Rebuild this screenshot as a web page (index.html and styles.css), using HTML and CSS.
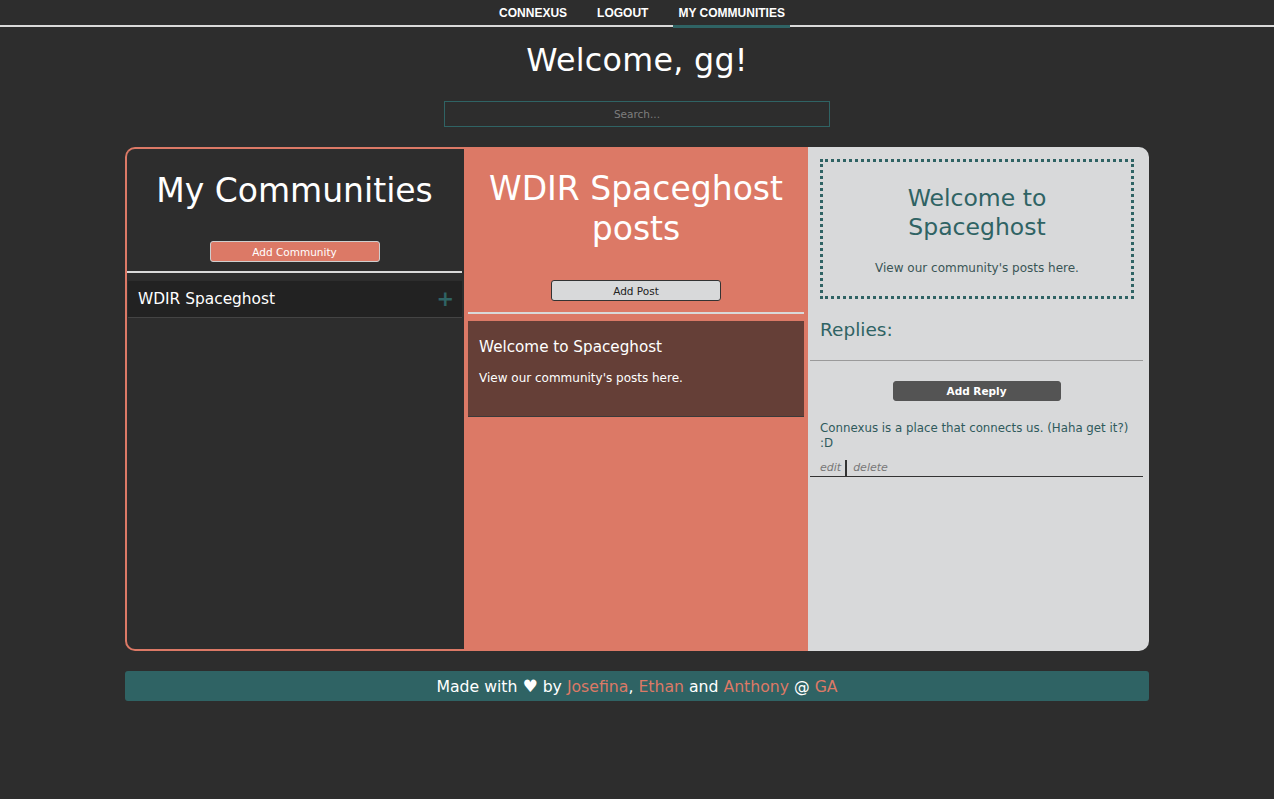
FILE: index.html
```html
<!DOCTYPE html>
<html>
<head>
<meta charset="utf-8">
<link rel="stylesheet" href="styles.css">
</head>
<body>
<nav class="topnav">
  <a class="nav-item">CONNEXUS</a>
  <a class="nav-item">LOGOUT</a>
  <a class="nav-item active">MY COMMUNITIES</a>
</nav>
<header class="welcome">
  <h1 class="welcome-title">Welcome, gg!</h1>
  <input class="search" type="text" placeholder="Search...">
</header>
<main class="board">
  <section class="col col-communities">
    <h2 class="col-title">My Communities</h2>
    <div class="btn-row"><button class="btn btn-salmon">Add Community</button></div>
    <hr class="rule rule-light">
    <div class="community-item">
      <span class="community-name">WDIR Spaceghost</span>
      <span class="community-plus">+</span>
    </div>
  </section>
  <section class="col col-posts">
    <h2 class="col-title">WDIR Spaceghost posts</h2>
    <div class="btn-row btn-row-post"><button class="btn btn-light">Add Post</button></div>
    <hr class="rule rule-light rule-post">
    <article class="post-card">
      <h3 class="post-title">Welcome to Spaceghost</h3>
      <p class="post-body">View our community's posts here.</p>
    </article>
  </section>
  <section class="col col-detail">
    <div class="detail-box">
      <h2 class="detail-title">Welcome to Spaceghost</h2>
      <p class="detail-body">View our community's posts here.</p>
    </div>
    <h3 class="replies-title">Replies:</h3>
    <hr class="rule rule-grey">
    <div class="btn-row btn-row-reply"><button class="btn btn-dark">Add Reply</button></div>
    <div class="reply">
      <p class="reply-text">Connexus is a place that connects us. (Haha get it?) :D</p>
      <div class="reply-actions"><span class="reply-edit">edit</span><span class="reply-delete">delete</span></div>
    </div>
  </section>
</main>
<footer class="footer">
  Made with <span class="heart">&#9829;</span> by <span class="name">Josefina</span>, <span class="name">Ethan</span> and <span class="name">Anthony</span> @ <span class="name">GA</span>
</footer>
</body>
</html>
```
FILE: styles.css
```css
* { box-sizing: border-box; }
html, body { margin: 0; padding: 0; }
body {
  background: #2d2d2d;
  font-family: "DejaVu Sans", "Noto Sans", sans-serif;
  color: #fff;
  min-height: 799px;
}
.topnav {
  display: flex;
  justify-content: center;
  align-items: flex-end;
  gap: 20px;
  height: 27px;
  padding-left: 10px;
  border-bottom: 2px solid #d9d9d9;
}
.nav-item {
  font-family: "Liberation Sans", Arial, sans-serif;
  font-weight: bold;
  font-size: 12px;
  color: #fff;
  padding: 0 5px 5px;
  line-height: 14px;
  border-bottom: 3px solid transparent;
  margin-bottom: -3px;
}
.nav-item.active { border-bottom-color: #2f6364; }
.welcome {
  display: flex;
  flex-direction: column;
  align-items: center;
}
.welcome-title {
  margin: 13px 0 0;
  font-size: 31.7px;
  font-weight: normal;
  line-height: 40px;
  letter-spacing: 0.3px;
}
.search {
  margin-top: 21px;
  width: 386px;
  height: 26px;
  background: transparent;
  border: 1px solid #2f6364;
  text-align: center;
  font-family: "DejaVu Sans", sans-serif;
  font-size: 10.5px;
  color: #ccc;
  outline: none;
}
.search::placeholder { color: #7d7d7d; }
.board {
  width: 1024px;
  height: 504px;
  margin: 20px auto 0;
  display: flex;
}
.col { height: 100%; }
.col-communities {
  width: 339px;
  border: 2px solid #dc7966;
  border-right: none;
  border-radius: 10px 0 0 10px;
  background: #2d2d2d;
  padding: 0 2px 0 0;
}
.col-posts {
  width: 344px;
  background: #dc7966;
  padding: 0 4px;
}
.col-detail {
  width: 341px;
  background: #d8d9da;
  border-radius: 0 10px 10px 0;
  padding: 12px 6px 0 2px;
}
.col-title {
  margin: 0;
  text-align: center;
  font-weight: normal;
  font-size: 33px;
  line-height: 40px;
  padding-top: 22px;
}
.col-posts .col-title { padding: 22px 6px 0; }
.btn-row { display: flex; justify-content: center; }
.col-communities .btn-row { margin-top: 30px; }
.btn {
  font-family: "DejaVu Sans", sans-serif;
  font-size: 10.5px;
  height: 21px;
  width: 170px;
  border-radius: 3px;
  padding: 0;
  cursor: pointer;
}
.btn-salmon { background: #dc7966; color: #fff; border: 1px solid #cfcfcf; }
.btn-light { background: #d8d9da; color: #222; border: 1px solid #333; }
.btn-dark { background: #545454; color: #fff; border: 1px solid #545454; width: 168px; height: 20px; font-weight: bold; }
.rule { border: none; margin: 0; }
.rule-light { height: 2px; background: #d9d9d9; margin-top: 9px; }
.community-item {
  margin-top: 8px;
  height: 37px;
  background: #222;
  border-bottom: 1px solid #444;
  display: flex;
  align-items: center;
  justify-content: space-between;
  padding: 0 8px 0 10px;
  margin-left: 1px;
}
.community-name { font-size: 15.4px; }
.community-plus { color: #2f6364; font-size: 21px; font-weight: bold; line-height: 1; }
.btn-row-post { margin-top: 31px; }
.rule-post { margin-top: 11px; }
.post-card {
  margin-top: 7px;
  background: #653f37;
  border-bottom: 1px solid #3a3a3a;
  height: 96px;
  padding: 16px 11px 0;
}
.post-title { margin: 0; font-weight: normal; font-size: 15.2px; line-height: 20px; }
.post-body { margin: 13px 0 0; font-size: 12px; line-height: 16px; }
.detail-box {
  margin-left: 10px;
  width: 314px;
  height: 140px;
  border: 3px dotted #2f6364;
  text-align: center;
  color: #2f6364;
  padding-top: 22px;
}
.detail-title { margin: 0; padding: 0 50px; font-weight: normal; font-size: 23.5px; line-height: 29px; }
.detail-body { margin: 19px 0 0; font-size: 12px; color: #3a5556; }
.replies-title {
  margin: 19px 0 0 10px;
  font-weight: normal;
  font-size: 18.5px;
  color: #2f6364;
  line-height: 24px;
}
.rule-grey { height: 1px; background: #9a9a9a; margin-top: 18px; }
.btn-row-reply { margin-top: 20px; }
.reply { margin-top: 20px; border-bottom: 1px solid #333; }
.reply-text {
  margin: 0 0 0 10px;
  font-size: 11.8px;
  line-height: 15px;
  color: #2f5a5c;
}
.reply-actions {
  margin: 9px 0 0 10px;
  font-size: 11px;
  font-style: italic;
  color: #777;
  display: flex;
  line-height: 16px;
}
.reply-edit { padding-right: 4px; border-right: 2px solid #333; }
.reply-delete { padding-left: 6px; }
.footer {
  width: 1024px;
  margin: 20px auto 0;
  height: 30px;
  background: #2f6364;
  border-radius: 3px;
  text-align: center;
  line-height: 30px;
  font-size: 15.7px;
  color: #fff;
}
.footer .name { color: #dc7966; }
.heart { font-size: 17px; }
```
